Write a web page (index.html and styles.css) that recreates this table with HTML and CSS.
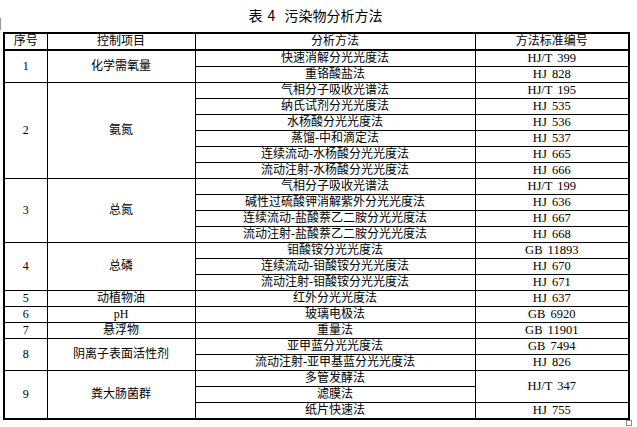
FILE: index.html
```html
<!DOCTYPE html>
<html lang="zh">
<head>
<meta charset="utf-8">
<title>表 4 污染物分析方法</title>
<link rel="stylesheet" href="styles.css">
</head>
<body>
<div class="page">
  <div class="mark"></div>
  <h1 class="title">表<span class="num">4</span>污染物分析方法</h1>
  <table class="tbl">
    <colgroup>
      <col class="c1"><col class="c2"><col class="c3"><col class="c4">
    </colgroup>
    <thead>
      <tr><th>序号</th><th>控制项目</th><th>分析方法</th><th>方法标准编号</th></tr>
    </thead>
    <tbody>
      <tr><td rowspan="2">1</td><td rowspan="2">化学需氧量</td><td>快速消解分光光度法</td><td class="code">HJ/T 399</td></tr>
      <tr><td>重铬酸盐法</td><td class="code">HJ 828</td></tr>

      <tr><td rowspan="6">2</td><td rowspan="6">氨氮</td><td>气相分子吸收光谱法</td><td class="code">HJ/T 195</td></tr>
      <tr><td>纳氏试剂分光光度法</td><td class="code">HJ 535</td></tr>
      <tr><td>水杨酸分光光度法</td><td class="code">HJ 536</td></tr>
      <tr><td>蒸馏-中和滴定法</td><td class="code">HJ 537</td></tr>
      <tr><td>连续流动-水杨酸分光光度法</td><td class="code">HJ 665</td></tr>
      <tr><td>流动注射-水杨酸分光光度法</td><td class="code">HJ 666</td></tr>

      <tr><td rowspan="4">3</td><td rowspan="4">总氮</td><td>气相分子吸收光谱法</td><td class="code">HJ/T 199</td></tr>
      <tr><td>碱性过硫酸钾消解紫外分光光度法</td><td class="code">HJ 636</td></tr>
      <tr><td>连续流动-盐酸萘乙二胺分光光度法</td><td class="code">HJ 667</td></tr>
      <tr><td>流动注射-盐酸萘乙二胺分光光度法</td><td class="code">HJ 668</td></tr>

      <tr><td rowspan="3">4</td><td rowspan="3">总磷</td><td>钼酸铵分光光度法</td><td class="code">GB 11893</td></tr>
      <tr><td>连续流动-钼酸铵分光光度法</td><td class="code">HJ 670</td></tr>
      <tr><td>流动注射-钼酸铵分光光度法</td><td class="code">HJ 671</td></tr>

      <tr><td>5</td><td>动植物油</td><td>红外分光光度法</td><td class="code">HJ 637</td></tr>
      <tr><td>6</td><td>pH</td><td>玻璃电极法</td><td class="code">GB 6920</td></tr>
      <tr><td>7</td><td>悬浮物</td><td>重量法</td><td class="code">GB 11901</td></tr>

      <tr><td rowspan="2">8</td><td rowspan="2">阴离子表面活性剂</td><td>亚甲蓝分光光度法</td><td class="code">GB 7494</td></tr>
      <tr><td>流动注射-亚甲基蓝分光光度法</td><td class="code">HJ 826</td></tr>

      <tr><td rowspan="3">9</td><td rowspan="3">粪大肠菌群</td><td>多管发酵法</td><td class="code" rowspan="2">HJ/T 347</td></tr>
      <tr><td>滤膜法</td></tr>
      <tr><td>纸片快速法</td><td class="code">HJ 755</td></tr>
    </tbody>
  </table>
  <div class="corner"></div>
</div>
</body>
</html>
```
FILE: styles.css
```css
html, body {
  margin: 0;
  padding: 0;
  background: #ffffff;
}

.page {
  position: relative;
  width: 637px;
  height: 427px;
  overflow: hidden;
  font-family: "Liberation Serif", "Noto Sans CJK SC", serif;
  color: #000000;
}

.mark {
  position: absolute;
  left: 0;
  top: 18px;
  width: 1px;
  height: 12px;
  background: #9a9a9a;
}

.title {
  margin: 0;
  height: 32px;
  line-height: 31px;
  font-family: "Noto Sans CJK SC", sans-serif;
  font-size: 14px;
  font-weight: normal;
  text-align: center;
  padding-right: 6px;
}

.title .num {
  margin: 0 9px 0 5px;
}

.tbl {
  margin-left: 3px;
  width: 625px;
  border-collapse: collapse;
  table-layout: fixed;
  border: 2px solid #000000;
}

.c1 { width: 43px; }
.c2 { width: 148px; }
.c3 { width: 280px; }
.c4 { width: 154px; }

.tbl th,
.tbl td {
  border: 1px solid #000000;
  padding: 0;
  height: 15px;
  line-height: 15px;
  font-size: 12px;
  font-weight: normal;
  text-align: center;
  vertical-align: middle;
  white-space: nowrap;
}

.tbl thead th {
  border-bottom: 2px solid #000000;
}

.tbl td.code {
  font-size: 12.5px;
  word-spacing: 2px;
}

.corner {
  position: absolute;
  left: 626px;
  top: 420px;
  width: 4px;
  height: 4px;
  border: 1px solid #8a8a8a;
}
```
